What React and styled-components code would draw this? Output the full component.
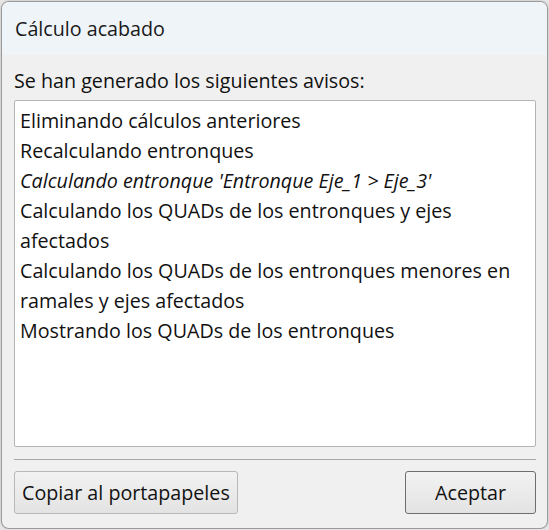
import styled, {createGlobalStyle} from "styled-components";

const GlobalStyle = createGlobalStyle`
    html, body {
        margin: 0;
        padding: 0;
        background: #e6e6e6;
    }
    body {
        font-family: "Open Sans", "Noto Sans", sans-serif;
    }
`;

const Window = styled.div`
    box-sizing: border-box;
    margin: 1px 0 0 1px;
    width: 547px;
    height: 528px;
    border: 1px solid #9a9a9a;
    border-radius: 8px;
    overflow: hidden;
    background: #f0f0f0;
    display: flex;
    flex-direction: column;
    box-shadow: 0 0 2px rgba(0, 0, 0, 0.25);
`;

const TitleBar = styled.div`
    height: 53px;
    flex-shrink: 0;
    background: #eff4f9;
    display: flex;
    align-items: center;
    padding: 0 13px;
    font-size: 19.7px;
    color: #1a1a1a;
`;

const Body = styled.div`
    flex: 1;
    display: flex;
    flex-direction: column;
    padding: 12px 11px 13px 12px;
`;

const Label = styled.div`
    font-size: 19.7px;
    color: #111;
    line-height: 28px;
    margin-bottom: 5px;
`;

const MessageList = styled.div`
    box-sizing: border-box;
    height: 347px;
    background: #fff;
    border: 1px solid #b4b4b4;
    border-radius: 2px;
    padding: 5px 5px;
    overflow: hidden;
`;

const Line = styled.div`
    font-size: 19.7px;
    line-height: 30px;
    color: #111;
    font-style: ${p => (p.$italic ? "italic" : "normal")};
`;

const Separator = styled.hr`
    border: none;
    border-top: 1px solid #a8a8a8;
    margin: 12px 0 11px;
`;

const Buttons = styled.div`
    display: flex;
    justify-content: space-between;
`;

const Button = styled.button`
    box-sizing: border-box;
    height: 43px;
    min-width: ${p => (p.$wide ? "auto" : "131px")};
    padding: 0 7px;
    font-family: inherit;
    font-size: 19.7px;
    color: #111;
    background: linear-gradient(#f2f2f2, #e3e3e3);
    border: 1px solid ${p => (p.$primary ? "#6e6e6e" : "#b8b8b8")};
    border-radius: 3px;
`;

const messages = [
    {text: "Eliminando cálculos anteriores"},
    {text: "Recalculando entronques"},
    {text: "Calculando entronque 'Entronque Eje_1 > Eje_3'", italic: true},
    {text: "Calculando los QUADs de los entronques y ejes afectados"},
    {text: "Calculando los QUADs de los entronques menores en ramales y ejes afectados"},
    {text: "Mostrando los QUADs de los entronques"},
];

const App = () => {
    return (
        <>
            <GlobalStyle/>
            <Window>
                <TitleBar>Cálculo acabado</TitleBar>
                <Body>
                    <Label>Se han generado los siguientes avisos:</Label>
                    <MessageList>
                        {messages.map((m, i) => (
                            <Line key={i} $italic={m.italic}>{m.text}</Line>
                        ))}
                    </MessageList>
                    <Separator/>
                    <Buttons>
                        <Button $wide>Copiar al portapapeles</Button>
                        <Button $primary>Aceptar</Button>
                    </Buttons>
                </Body>
            </Window>
        </>
    );
};

export default App;
